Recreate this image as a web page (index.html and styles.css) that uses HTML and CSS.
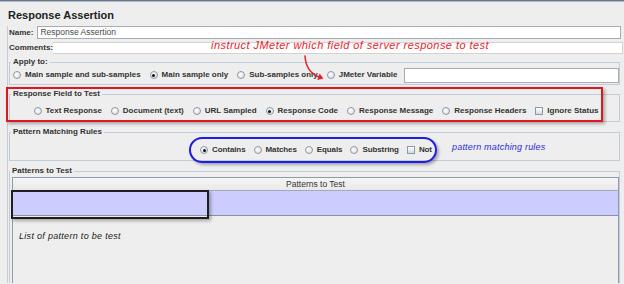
FILE: index.html
```html
<!DOCTYPE html>
<html>
<head>
<meta charset="utf-8">
<title>Response Assertion</title>
<link rel="stylesheet" href="styles.css">
</head>
<body>
<div class="topline"></div>
<h1 class="title">Response Assertion</h1>
<div class="panel">
  <div class="row-field">
    <span class="lbl lbl-name">Name:</span>
    <div class="field field-name">Response Assertion</div>
  </div>
  <div class="row-field row-comments">
    <span class="lbl">Comments:</span>
    <div class="field field-comments"></div>
  </div>
  <fieldset class="group group-apply">
    <legend>Apply to:</legend>
    <div class="opts">
      <span class="opt"><span class="radio"></span>Main sample and sub-samples</span>
      <span class="opt"><span class="radio on"></span>Main sample only</span>
      <span class="opt"><span class="radio"></span>Sub-samples only</span>
      <span class="opt"><span class="radio"></span>JMeter Variable</span>
      <div class="field field-var"></div>
    </div>
  </fieldset>
  <fieldset class="group group-field">
    <legend>Response Field to Test</legend>
    <div class="opts opts-center">
      <span class="opt"><span class="radio"></span>Text Response</span>
      <span class="opt"><span class="radio"></span>Document (text)</span>
      <span class="opt"><span class="radio"></span>URL Sampled</span>
      <span class="opt"><span class="radio on"></span>Response Code</span>
      <span class="opt"><span class="radio"></span>Response Message</span>
      <span class="opt"><span class="radio"></span>Response Headers</span>
      <span class="opt"><span class="check"></span>Ignore Status</span>
    </div>
  </fieldset>
  <fieldset class="group group-rules">
    <legend>Pattern Matching Rules</legend>
    <div class="opts opts-center opts-tight">
      <span class="opt"><span class="radio on"></span>Contains</span>
      <span class="opt"><span class="radio"></span>Matches</span>
      <span class="opt"><span class="radio"></span>Equals</span>
      <span class="opt"><span class="radio"></span>Substring</span>
      <span class="opt"><span class="check"></span>Not</span>
    </div>
  </fieldset>
  <fieldset class="group group-patterns">
    <legend>Patterns to Test</legend>
    <div class="table">
      <div class="thead">Patterns to Test</div>
      <div class="trow sel"></div>
      <div class="tbody"></div>
    </div>
  </fieldset>
</div>

<div class="mark mark-red"></div>
<div class="mark mark-blue"></div>
<div class="mark mark-black"></div>
<div class="note note-red">instruct JMeter which field of server response to test</div>
<svg class="arrow" width="30" height="35" viewBox="0 0 30 35">
  <path d="M5 6 Q 6 22 19 27" fill="none" stroke="#e8202a" stroke-width="1.5" stroke-linecap="round"/>
  <polygon points="23.5,28.6 17.2,30 19.6,23.6" fill="#e8202a"/>
</svg>
<div class="note note-blue">pattern matching rules</div>
<div class="note note-black">List of pattern to be test</div>
</body>
</html>
```
FILE: styles.css
```css
html, body {
  margin: 0;
}
body {
  width: 624px;
  height: 284px;
  overflow: hidden;
  background: #eeeeee;
  position: relative;
  font-family: "Liberation Sans", Arial, sans-serif;
  color: #333;
}
.topline {
  height: 2px;
  background: linear-gradient(#65778a 0 1px, #b3bdc8 1px 2px);
}
.title {
  margin: 7px 0 0 8px;
  font-size: 11px;
  line-height: 13px;
  font-weight: bold;
  color: #222;
}
.panel {
  margin: 4px 0 0 7px;
  border-left: 1px solid #c4ccd4;
}
.row-field {
  display: flex;
  align-items: center;
  height: 13px;
  margin-top: 1px;
}
.row-comments {
  margin-top: 3px;
  height: 12px;
}
.lbl {
  font-weight: bold;
  font-size: 8px;
  line-height: 10px;
  padding-left: 1px;
  white-space: nowrap;
}
.lbl-name {
  margin-right: 4px;
}
.field {
  flex: 1;
  align-self: stretch;
  background: #fff;
  border: 1px solid #a4acb4;
  box-sizing: border-box;
  font-size: 8.5px;
  line-height: 11px;
  padding-left: 2px;
  color: #4a4a4a;
}
.field-name {
  margin-right: 3px;
}
.field-comments {
  border-color: #d2d2d2;
  border-left: none;
  margin-right: 1px;
}
.group {
  margin: 3px 4px 0 1px;
  padding: 0 0 1px 3px;
  border: 1px solid #bfcddb;
  min-width: 0;
}
legend {
  font-weight: bold;
  font-size: 8px;
  line-height: 10px;
  padding: 0 2px;
  margin-left: -2px;
  color: #333;
}
.group-field {
  margin-top: 4px;
  padding-top: 4px;
  padding-bottom: 2px;
}
.group-rules {
  margin-top: 5px;
  padding-top: 5px;
  padding-bottom: 2px;
}
.group-patterns {
  margin-top: 5px;
  padding: 1px 0 0 2px;
  border-bottom: none;
}
.opts {
  display: flex;
  align-items: center;
  height: 16px;
  gap: 9px;
}
.opts-center {
  justify-content: center;
}
.opts-tight {
  gap: 8px;
  letter-spacing: -0.1px;
}
.opt {
  display: flex;
  align-items: center;
  gap: 4px;
  font-weight: bold;
  font-size: 8px;
  line-height: 10px;
  white-space: nowrap;
  color: #333;
}
.radio {
  position: relative;
  width: 8px;
  height: 8px;
  box-sizing: border-box;
  border-radius: 50%;
  border: 1px solid #8c99a6;
  background: radial-gradient(circle at 35% 35%, #ffffff, #d3dae2);
  flex: none;
}
.radio.on::after {
  content: "";
  position: absolute;
  left: 1.5px;
  top: 1.5px;
  width: 3px;
  height: 3px;
  border-radius: 50%;
  background: #111;
}
.check {
  width: 8px;
  height: 8px;
  box-sizing: border-box;
  border: 1px solid #8c99a6;
  background: linear-gradient(#ffffff, #d3dae2);
  flex: none;
}
.field-var {
  height: 15px;
  flex: 1;
  align-self: center;
  margin-left: -2px;
}
.table {
  border: 1px solid #8f9cab;
  border-bottom: none;
  height: 105px;
  background: #eeeeee;
}
.thead {
  height: 12px;
  line-height: 12px;
  font-size: 8.5px;
  text-align: center;
  border-bottom: 1px solid #a0abb7;
  background: linear-gradient(#f5f5f5, #e9e9e9);
  color: #333;
}
.trow {
  height: 24px;
}
.trow.sel {
  background: #ccccff;
  border-bottom: 1px solid #8794a6;
}
.mark {
  position: absolute;
  box-sizing: border-box;
}
.mark-red {
  left: 6px;
  top: 87px;
  width: 597px;
  height: 35px;
  border: 2px solid #e3151d;
  box-shadow: 2px 2px 3px rgba(0, 0, 0, 0.3);
}
.mark-blue {
  left: 189px;
  top: 137px;
  width: 248px;
  height: 26px;
  border: 2px solid #1c1ce6;
  border-radius: 13px;
  box-shadow: 2px 2px 3px rgba(0, 0, 0, 0.3);
}
.mark-black {
  left: 11px;
  top: 190px;
  width: 198px;
  height: 29px;
  border: 2px solid #1e1e1e;
  box-shadow: 2px 2px 3px rgba(0, 0, 0, 0.3);
}
.note {
  position: absolute;
  font-style: italic;
  white-space: nowrap;
  font-family: "Liberation Sans", Arial, sans-serif;
}
.note-red {
  left: 211px;
  top: 39px;
  font-size: 11px;
  line-height: 12px;
  letter-spacing: 0.45px;
  color: #f0202a;
}
.note-blue {
  left: 452px;
  top: 142px;
  font-size: 9px;
  line-height: 10px;
  letter-spacing: 0.2px;
  color: #2b2bd8;
}
.note-black {
  left: 19px;
  top: 231px;
  font-size: 9px;
  line-height: 10px;
  letter-spacing: 0.3px;
  color: #222;
}
.arrow {
  position: absolute;
  left: 300px;
  top: 50px;
}
```
